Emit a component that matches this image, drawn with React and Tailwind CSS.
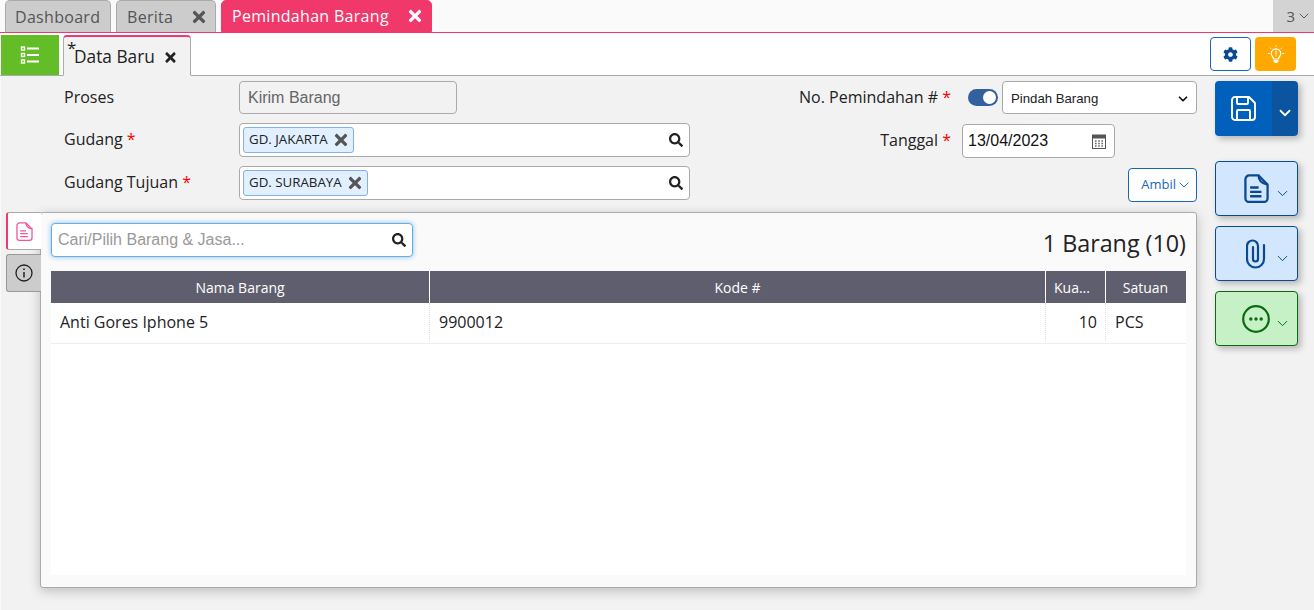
import React from 'react';
import { FaCog, FaSearch, FaTimes } from 'react-icons/fa';
import { ChevronDown } from 'lucide-react';

const sans = "font-['Open_Sans',sans-serif]";
const arial = "font-['Liberation_Sans',Arial,sans-serif]";

function Req() {
  return <span className="whitespace-pre text-[#f00]"> *</span>;
}

function ListIcon() {
  return (
    <svg width="20" height="20" viewBox="0 0 20 20" fill="none" stroke="#fff">
      <rect x="1.5" y="2" width="3" height="3" strokeWidth="1.4" />
      <rect x="1.5" y="8.5" width="3" height="3" strokeWidth="1.4" />
      <rect x="1.5" y="15" width="3" height="3" strokeWidth="1.4" />
      <path d="M7 3.5h12M7 10h12M7 16.5h12" strokeWidth="2" />
    </svg>
  );
}

function SaveIcon() {
  return (
    <svg width="25" height="25" viewBox="0 0 25 25" fill="none" stroke="#fff" strokeWidth="1.9" strokeLinejoin="round">
      <path d="M4 1H18L24 7V21a3 3 0 0 1-3 3H4a3 3 0 0 1-3-3V4a3 3 0 0 1 3-3z" />
      <path d="M6 1V7a1 1 0 0 0 1 1H16a1 1 0 0 0 1-1V1" />
      <path d="M6 24V15a1 1 0 0 1 1-1H18a1 1 0 0 1 1 1V24" />
    </svg>
  );
}

function BulbIcon() {
  return (
    <svg width="16" height="19" viewBox="0 0 16 19" fill="none" stroke="#fff">
      <path d="M8 0v1.6M1.8 2.6l1.2 1.2M14.2 2.6L13 3.8M0 8.5h1.6M14.4 8.5H16" strokeWidth="1" />
      <path d="M5.6 14c0-2-2.3-2.6-2.3-5.5a4.7 4.7 0 0 1 9.4 0c0 2.9-2.3 3.5-2.3 5.5z" strokeWidth="1.2" />
      <path d="M8 5.5v4M8 10.6v1" strokeWidth="1.2" />
      <path d="M5.6 15h4.8v1.6l-1.2 1.4H6.8l-1.2-1.4z" fill="#fff" stroke="none" />
    </svg>
  );
}

function DocIcon({ w = 25, h = 29, color = '#0a4a8f', width = 2.4 }) {
  return (
    <svg width={w} height={h} viewBox="1.5 0 26.5 30" fill="none" stroke={color} strokeWidth={width} strokeLinejoin="round" preserveAspectRatio="none">
      <path d="M7 1.5h9l1 0c0 5 2 8 9.5 9.5v14a4 4 0 0 1-4 4H7a4 4 0 0 1-4-4V5.5a4 4 0 0 1 4-4z" />
      <path d="M17 1.5l9.5 9.5" />
      <path d="M8 14h9M8 18.5h12M8 23h12" />
    </svg>
  );
}

function ClipIcon() {
  return (
    <svg width="20" height="30" viewBox="0 0 20 30" fill="none" stroke="#0a4a8f" strokeWidth="2.2" strokeLinecap="round">
      <path d="M18 6V20a8.5 8.5 0 0 1-17 0V7a5.5 5.5 0 0 1 11 0V20a2.5 2.5 0 0 1-5 0V8" />
    </svg>
  );
}

function MoreIcon() {
  return (
    <svg width="28" height="28" viewBox="0 0 28 28" fill="none">
      <circle cx="14" cy="14" r="12.8" stroke="#0c6b12" strokeWidth="2.2" />
      <circle cx="8.8" cy="14" r="1.7" fill="#0c6b12" />
      <circle cx="14" cy="14" r="1.7" fill="#0c6b12" />
      <circle cx="19.2" cy="14" r="1.7" fill="#0c6b12" />
    </svg>
  );
}

function InfoIcon() {
  return (
    <svg width="18" height="18" viewBox="0 0 18 18" fill="none" stroke="#222">
      <circle cx="9" cy="9" r="8" strokeWidth="1.3" />
      <path d="M9 8v5.5" strokeWidth="1.5" />
      <path d="M9 4.5v1.6" strokeWidth="1.7" />
    </svg>
  );
}

function CalendarIcon() {
  return (
    <svg width="14" height="15" viewBox="0 0 14 15">
      <rect x="0.5" y="1" width="13" height="13.5" fill="#fff" stroke="#555" />
      <rect x="0.5" y="1" width="13" height="3.5" fill="#555" />
      <path d="M3 7h1.6M6.2 7h1.6M9.4 7H11M3 9.5h1.6M6.2 9.5h1.6M9.4 9.5H11M3 12h1.6M6.2 12h1.6M9.4 12H11" stroke="#666" strokeWidth="1.4" />
    </svg>
  );
}

function TopTab({ label, closable, active, className }) {
  return (
    <div
      className={`flex h-[32px] items-center rounded-t-[5px] border pr-[7px] text-[16px] ${
        active ? 'border-[#f0386b] bg-[#f0386b] text-white' : 'border-b-0 border-[#aaa] bg-[#ccc] text-[#555]'
      } ${className}`}
    >
      <span className="tracking-[0.3px]">{label}</span>
      {closable && <FaTimes className={`ml-auto text-[18px] ${active ? 'text-white' : 'text-[#555]'}`} />}
    </div>
  );
}

function Chip({ label }) {
  return (
    <span className="flex h-[26px] items-center gap-[4px] rounded-[3px] border border-[#7db2ee] bg-[#e1efff] pl-[5px] pr-[3px] text-[13.3px] text-[#222]">
      {label}
      <FaTimes className="text-[18px] text-[#555]" />
    </span>
  );
}

function ChipField({ label }) {
  return (
    <div className="flex h-[34px] w-[451px] items-center rounded-[4px] border border-[#aaa] bg-white pl-[3px] pr-[6px]">
      <Chip label={label} />
      <FaSearch className="ml-auto text-[14px] text-[#222]" />
    </div>
  );
}

function ActionButton({ bg, border, chevron, children, className }) {
  return (
    <div className={`flex h-[55px] w-[83px] items-center rounded-[4px] border shadow-[3px_3px_6px_rgba(0,0,0,0.25)] ${bg} ${border} ${className}`}>
      <div className="ml-[25px] flex w-[30px] justify-center">{children}</div>
      <ChevronDown size={17} strokeWidth={1.4} color={chevron} className="ml-[3px] mt-[9px]" />
    </div>
  );
}

export default function App() {
  return (
    <div className={`flex h-[610px] w-[1314px] flex-col overflow-hidden bg-[#fafafa] text-[#222] ${sans}`}>
      {/* top tabs */}
      <div className="flex h-[33px] shrink-0 border-b border-[#f0386b] pl-[5px]">
        <TopTab label="Dashboard" className="w-[106px] pl-[9px]" />
        <TopTab label="Berita" closable className="ml-[5px] w-[100px] pl-[10px]" />
        <TopTab label="Pemindahan Barang" closable active className="ml-[5px] w-[211px] pl-[10px]" />
        <div className="ml-auto flex h-[32px] w-[41px] items-center justify-end gap-[1px] bg-[#d3d3d3] pr-[2px] text-[15px] text-[#555]">
          3 <ChevronDown size={16} strokeWidth={1.4} />
        </div>
      </div>

      {/* sub tabs */}
      <div className="flex h-[43px] shrink-0 items-end border-b border-[#aaa] bg-white pl-[1px]">
        <div className="flex h-[40px] w-[58px] items-center justify-center bg-[#62bd27]">
          <ListIcon />
        </div>
        <div className="relative z-10 -mb-px ml-[4px] flex h-[41px] w-[128px] items-center rounded-t-[4px] border border-t-[2px] border-[#aaa] border-t-[#ea3a7c] border-b-[#f2f2f2] bg-[#f2f2f2] pl-[10px] pt-[2px] text-[17.3px]">
          <span className="absolute left-[3px] top-[-2px] text-[17px]">*</span>
          Data Baru
          <FaTimes className="ml-[8px] text-[15px]" />
        </div>
        <div className="mb-[4px] ml-auto flex gap-[4px] pr-[18px]">
          <div className="flex h-[34px] w-[41px] items-center justify-center rounded-[4px] border border-[#1767b3] bg-white">
            <FaCog className="text-[15px] text-[#0a4a8f]" />
          </div>
          <div className="flex h-[34px] w-[41px] items-center justify-center rounded-[4px] bg-[#ffa800]">
            <BulbIcon />
          </div>
        </div>
      </div>

      {/* body */}
      <div className="ml-[1px] flex min-h-0 flex-1 bg-[#f2f2f2] pb-[2px]">
        <div className="w-[1196px] shrink-0">
          {/* form */}
          <div className="flex h-[136px] pt-[5px]">
            <div className="w-[238px] pl-[63px] text-[16px]">
              <div className="flex h-[31px] items-center">Proses</div>
              <div className="mt-[11px] flex h-[31px] items-center">Gudang<Req /></div>
              <div className="mt-[12px] flex h-[31px] items-center whitespace-pre">Gudang Tujuan<Req /></div>
            </div>
            <div className="w-[451px]">
              <div className={`flex h-[33px] w-[218px] items-center rounded-[4px] border border-[#aaa] bg-[#f2f2f2] pl-[8px] text-[16px] text-[#666] ${arial}`}>
                Kirim Barang
              </div>
              <div className="mt-[9px]"><ChipField label="GD. JAKARTA" /></div>
              <div className="mt-[9px]"><ChipField label="GD. SURABAYA" /></div>
            </div>
            <div className="flex-1">
              <div className="flex h-[33px] items-center">
                <div className="w-[261px] whitespace-pre pb-[2px] text-right text-[16px]">No. Pemindahan #<Req /></div>
                <div className="ml-[17px] flex h-[17px] w-[30px] items-center justify-end rounded-full bg-[#35609f] pr-[2px]">
                  <div className="h-[13px] w-[13px] rounded-full bg-white" />
                </div>
                <div className={`ml-[4px] flex h-[33px] w-[195px] items-center rounded-[4px] border border-[#aaa] bg-white pl-[8px] pr-[6px] pt-[2px] text-[13.2px] text-[#222] ${arial}`}>
                  Pindah Barang
                  <ChevronDown size={14} strokeWidth={3} className="ml-auto" color="#111" />
                </div>
              </div>
              <div className="mt-[10px] flex h-[34px] items-center">
                <div className="w-[261px] whitespace-pre pb-[2px] text-right text-[16px]">Tanggal<Req /></div>
                <div className={`ml-[11px] flex h-[34px] w-[153px] items-center rounded-[4px] border border-[#aaa] bg-white pl-[5px] pr-[8px] text-[16px] text-[#111] ${arial}`}>
                  13/04/2023
                  <span className="ml-auto flex"><CalendarIcon /></span>
                </div>
              </div>
              <div className="mt-[10px] flex justify-end">
                <div className="flex h-[34px] w-[69px] items-center justify-end rounded-[4px] border border-[#1767b3] bg-white pr-[4px] text-[13px] text-[#1767b3]">
                  Ambil <ChevronDown size={16} strokeWidth={1.4} />
                </div>
              </div>
            </div>
          </div>

          {/* panel with side tabs */}
          <div className="ml-[5px] flex">
            <div className="relative z-10 -mr-px w-[35px] shrink-0">
              <div className="flex h-[38px] items-center justify-center rounded-l-[3px] border-y border-l-[2px] border-[#aaa] border-l-[#f0386b] bg-white">
                <DocIcon w={17} h={19} color="#f0559a" width={2} />
              </div>
              <div className="mt-[4px] flex h-[38px] items-center justify-center rounded-l-[3px] border border-r-0 border-[#999] bg-[#ccc]">
                <InfoIcon />
              </div>
            </div>
            <div className="flex h-[376px] w-[1157px] flex-col rounded-[3px] border border-[#aaa] bg-[#fafafa] p-[10px] pb-[12px] shadow-[0_3px_12px_rgba(0,0,0,0.22)]">
              <div className="flex h-[34px] items-start justify-between">
                <div className={`flex h-[34px] w-[362px] items-center rounded-[4px] border border-[#66afe9] bg-white pl-[6px] pr-[6px] text-[16px] text-[#999] shadow-[0_0_5px_rgba(102,175,233,0.8)] ${arial}`}>
                  Cari/Pilih Barang &amp; Jasa...
                  <FaSearch className="ml-auto text-[14px] text-[#222]" />
                </div>
                <div className="pt-[5px] text-[23.3px] leading-[30px] text-[#222]">1 Barang (10)</div>
              </div>
              <div className="mt-[14px] flex-1 bg-white">
                <div className="grid h-[32px] grid-cols-[379px_616px_60px_79px] bg-[#5f5e6e] text-[14px] text-white">
                  <div className="flex items-center justify-center border-r border-white">Nama Barang</div>
                  <div className="flex items-center justify-center border-r border-white">Kode #</div>
                  <div className="flex items-center border-r border-white pl-[8px]">Kua...</div>
                  <div className="flex items-center justify-center">Satuan</div>
                </div>
                <div className="grid h-[41px] grid-cols-[379px_616px_60px_80px] border-b border-[#eee] pb-[2px] text-[16px]">
                  <div className="flex items-center border-r border-dotted border-[#ddd] pl-[9px]">Anti Gores Iphone 5</div>
                  <div className="flex items-center border-r border-dotted border-[#ddd] pl-[9px]">9900012</div>
                  <div className="flex items-center justify-end border-r border-dotted border-[#ddd] pr-[8px]">10</div>
                  <div className="flex items-center pl-[9px]">PCS</div>
                </div>
              </div>
            </div>
          </div>
        </div>

        {/* action buttons */}
        <div className="ml-[18px] w-[83px] shrink-0 pt-[5px]">
          <div className="flex h-[55px] w-[83px] overflow-hidden rounded-[4px] shadow-[3px_3px_6px_rgba(0,0,0,0.25)]">
            <div className="flex w-[57px] items-center justify-center bg-[#0060bc]">
              <SaveIcon />
            </div>
            <div className="flex flex-1 items-center justify-center bg-[#0a54a0] pt-[8px]">
              <ChevronDown size={18} color="#fff" strokeWidth={2.4} />
            </div>
          </div>
          <ActionButton bg="bg-[#d2e6fd]" border="border-[#0a4a8f]" chevron="#0a4a8f" className="mt-[25px]">
            <DocIcon />
          </ActionButton>
          <ActionButton bg="bg-[#d2e6fd]" border="border-[#0a4a8f]" chevron="#0a4a8f" className="mt-[10px]">
            <ClipIcon />
          </ActionButton>
          <ActionButton bg="bg-[#c6f0c6]" border="border-[#0c6b12]" chevron="#0c6b12" className="mt-[10px]">
            <MoreIcon />
          </ActionButton>
        </div>
      </div>
    </div>
  );
}
